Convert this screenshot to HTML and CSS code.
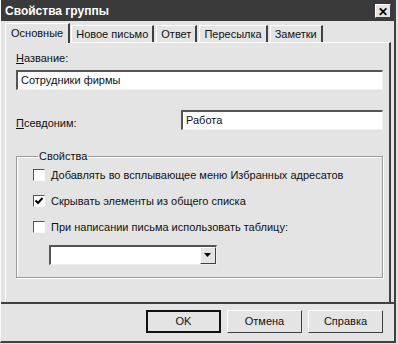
FILE: index.html
```html
<!DOCTYPE html>
<html><head><meta charset="utf-8"><link rel="stylesheet" href="styles.css"></head>
<body>
<div class="win">
  <div class="title"><span>Свойства группы</span><span class="close">✕</span></div>
  <div class="tabs">
    <div class="tab sel">Основные</div>
    <div class="tab">Новое письмо</div>
    <div class="tab">Ответ</div>
    <div class="tab">Пересылка</div>
    <div class="tab">Заметки</div>
  </div>
  <div class="panel">
    <div class="lbl"><u>Н</u>азвание:</div>
    <div class="input full">Сотрудники фирмы</div>
    <div class="row">
      <div class="lbl"><u>П</u>севдоним:</div>
      <div class="input alias">Работа</div>
    </div>
    <fieldset class="group">
      <legend>Свойства</legend>
      <div class="cb"><span class="box"></span>Добавлять во всплывающее меню Избранных адресатов</div>
      <div class="cb"><span class="box"><svg width="10" height="10" viewBox="0 0 10 10"><path d="M1.5 4.5 L4 7 L8.5 2" stroke="#000" stroke-width="2" fill="none"/></svg></span>Скрывать элементы из общего списка</div>
      <div class="cb"><span class="box"></span>При написании письма использовать таблицу:</div>
      <div class="combo"><span class="cval"></span><span class="arrow"><svg width="8" height="5" viewBox="0 0 8 5"><path d="M0 0 H7 L3.5 4 Z" fill="#000"/></svg></span></div>
    </fieldset>
  </div>
  <div class="buttons">
    <div class="btn def">OK</div>
    <div class="btn">Отмена</div>
    <div class="btn">Справка</div>
  </div>
</div>
</body></html>
```
FILE: styles.css
```css
html, body { margin: 0; padding: 0; }
body { background: #e4e4e4; font-family: "Liberation Sans", Arial, sans-serif; font-size: 11px; color: #111; }
.win { width: 396px; height: 343px; box-sizing: border-box; border-right: 2px solid #404040; border-bottom: 2px solid #404040; border-left: 1px solid #fafafa; display: flex; flex-direction: column; }
.title { height: 21px; background: #3a3a3a; color: #fff; font-weight: bold; font-size: 12px; display: flex; align-items: center; justify-content: space-between; padding: 0 3px 0 4px; }
.close { width: 16px; height: 14px; background: #e4e4e4; color: #000; font-size: 12px; line-height: 14px; text-align: center; border: 1px solid; border-color: #fff #404040 #404040 #fff; box-sizing: border-box; font-weight: bold; }
.tabs { display: flex; padding: 3px 0 0 4px; height: 18px; align-items: flex-end; }
.tab { height: 16px; line-height: 16px; padding: 0 4px; border-top: 1px solid #fff; border-left: 1px solid #fff; border-right: 2px solid #404040; margin-right: 2px; }
.tab.sel { height: 19px; line-height: 18px; padding: 0 5px 0 5px; margin-right: 1px; margin-bottom: -1px; background: #e4e4e4; position: relative; z-index: 1; }
.panel { margin: 0 3px 0 4px; height: 260px; box-sizing: border-box; border-top: 1px solid #fff; border-left: 1px solid #fff; border-right: 2px solid #404040; padding: 8px 6px 0 10px; }
.lbl { height: 14px; line-height: 14px; }
.input { background: #fff; height: 20px; box-sizing: border-box; border-top: 2px solid #555; border-left: 2px solid #555; border-right: 1px solid #f0f0f0; border-bottom: 1px solid #f0f0f0; line-height: 17px; padding-left: 3px; }
.full { margin-top: 5px; }
.row { display: flex; justify-content: space-between; align-items: center; margin-top: 20px; }
.row .lbl { margin-top: 6px; }
.alias { width: 202px; }
.group { margin: 20px 0 0 0; padding: 0 0 0 16px; height: 128px; box-sizing: border-box; border: 1px solid #9a9a9a; box-shadow: inset 1px 1px 0 #fff, 1px 1px 0 #fff; }
legend { padding: 0 1px; margin-left: 5px; line-height: 12px; }
.cb { display: flex; align-items: center; height: 26px; }
.box { width: 12px; height: 12px; box-sizing: border-box; background: #fff; border-top: 1px solid #555; border-left: 1px solid #555; border-right: 1px solid #fafafa; border-bottom: 1px solid #fafafa; margin-right: 6px; display: flex; align-items: center; justify-content: center; }
.combo { margin: 5px 0 0 16px; width: 168px; height: 20px; box-sizing: border-box; background: #fff; border-top: 2px solid #555; border-left: 2px solid #555; border-right: 1px solid #f0f0f0; border-bottom: 1px solid #f0f0f0; display: flex; justify-content: flex-end; }
.cval { flex: 1; }
.arrow { width: 16px; background: #e4e4e4; border: 1px solid; border-color: #fff #404040 #404040 #fff; box-sizing: border-box; display: flex; align-items: center; justify-content: center; }
.buttons { border-top: 2px solid #404040; flex: 1; display: flex; justify-content: flex-end; padding: 6px 11px 0 0; gap: 6px; }
.btn { width: 75px; height: 23px; box-sizing: border-box; text-align: center; line-height: 20px; border: 1px solid; border-color: #fff #404040 #404040 #fff; }
.btn.def { border: 2px solid #111; line-height: 19px; }
```
